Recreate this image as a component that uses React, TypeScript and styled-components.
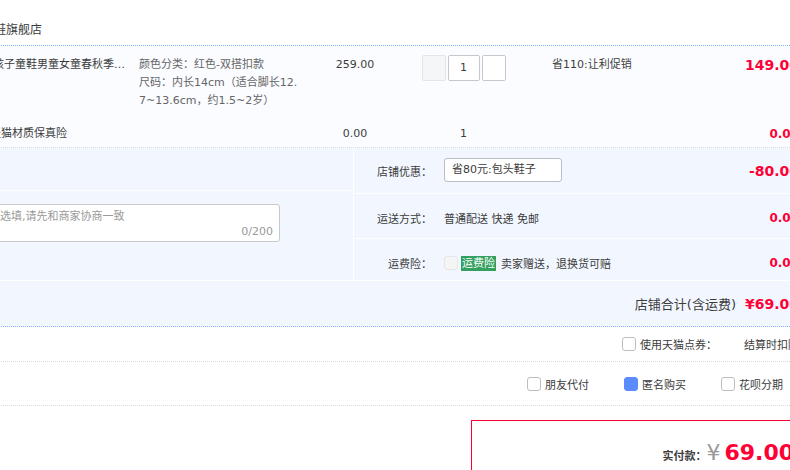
import React from 'react';
import styled, { createGlobalStyle } from 'styled-components';

const GlobalStyle = createGlobalStyle`
  html, body {
    margin: 0;
    padding: 0;
    background: #fff;
    overflow: hidden;
  }
  body {
    font-family: 'DejaVu Sans', 'Noto Sans CJK SC', sans-serif;
    font-size: 11px;
    color: #3c3c3c;
  }
`;

const RED = '#ff0036';
const BLUE_LINE = '#80b2ff';
const GRAY_LINE = '#d9d9d9';
const PANEL_BG = '#f2f7ff';

interface LineItem {
  title: string;
  specs: string[];
  price: string;
  qty: number;
  promo: string;
  total: string;
}

const item: LineItem = {
  title: '男孩子童鞋男童女童春秋季新款板鞋',
  specs: ['颜色分类：红色-双搭扣款', '尺码：内长14cm（适合脚长12.7~13.6cm，约1.5~2岁）'],
  price: '259.00',
  qty: 1,
  promo: '省110:让利促销',
  total: '149.00',
};

const App: React.FC = () => {
  return (
    <>
      <GlobalStyle />
      <Page>
        <StoreHeader>
          <StoreName>童鞋旗舰店</StoreName>
        </StoreHeader>

        <OrderItems>
          <ItemRow>
            <Thumb />
            <ItemTitle>{item.title}</ItemTitle>
            <Specs>
              {item.specs.map((s) => (
                <div key={s}>{s}</div>
              ))}
            </Specs>
            <PriceCell>{item.price}</PriceCell>
            <QtyCell>
              <Stepper>
                <StepButton $disabled />
                <QtyInput>{item.qty}</QtyInput>
                <StepButton />
              </Stepper>
            </QtyCell>
            <Promo>{item.promo}</Promo>
            <Amount $size={14}>{item.total}</Amount>
          </ItemRow>
          <ServiceRow>
            <span />
            <ServiceTitle>天猫材质保真险</ServiceTitle>
            <span />
            <PriceCell>0.00</PriceCell>
            <QtyCell>1</QtyCell>
            <span />
            <Amount $size={12}>0.00</Amount>
          </ServiceRow>
        </OrderItems>

        <Extras>
          <MemoColumn>
            <MemoRow $height={42} />
            <MemoRow>
              <MemoLabel>给卖家留言：</MemoLabel>
              <MemoBox>
                <MemoInput placeholder="选填,请先和商家协商一致" />
                <MemoCount>0/200</MemoCount>
              </MemoBox>
            </MemoRow>
          </MemoColumn>
          <OptionColumn>
            <OptionRow $height={46} $padTop={1}>
              <OptionLabel>店铺优惠：</OptionLabel>
              <OptionValue>
                <CouponSelect>省80元:包头鞋子</CouponSelect>
              </OptionValue>
              <Amount $size={14}>-80.00</Amount>
            </OptionRow>
            <OptionRow $height={45} $padTop={4}>
              <OptionLabel>运送方式：</OptionLabel>
              <OptionValue>普通配送 快递 免邮</OptionValue>
              <Amount $size={12}>0.00</Amount>
            </OptionRow>
            <OptionRow $height={41} $padTop={7} $last>
              <OptionLabel>运费险：</OptionLabel>
              <OptionValue>
                <Check $disabled />
                <Badge>运费险</Badge>
                卖家赠送，退换货可赔
              </OptionValue>
              <Amount $size={12}>0.00</Amount>
            </OptionRow>
          </OptionColumn>
        </Extras>

        <StoreTotal>
          <TotalLabel>店铺合计(含运费)</TotalLabel>
          <TotalAmount>¥69.00</TotalAmount>
        </StoreTotal>

        <CouponRow>
          <CheckItem>
            <Check />
            使用天猫点券：
          </CheckItem>
          <CouponNote>结算时扣除</CouponNote>
        </CouponRow>

        <PayOptions>
          <CheckItem>
            <Check />
            朋友代付
          </CheckItem>
          <CheckItem>
            <Check $checked />
            匿名购买
          </CheckItem>
          <CheckItem>
            <Check />
            花呗分期
          </CheckItem>
        </PayOptions>

        <PayArea>
          <PayBox>
            <PayLabel>实付款：</PayLabel>
            <PayYen>¥</PayYen>
            <PayTotal>69.00</PayTotal>
          </PayBox>
        </PayArea>
      </Page>
    </>
  );
};

const Page = styled.div`
  width: 912px;
  margin-left: -100px;
`;

const StoreHeader = styled.div`
  height: 25px;
  padding: 20px 0 0 82px;
  border-bottom: 1px dotted ${BLUE_LINE};
`;

const StoreName = styled.span`
  font-size: 12px;
  line-height: 20px;
`;

const OrderItems = styled.div`
  background: #fbfcff;
  border-bottom: 1px dotted ${GRAY_LINE};
`;

const ItemRow = styled.div`
  display: grid;
  grid-template-columns: 82px 157px 163px 110px 103px 175px 1fr;
  align-items: start;
  padding-top: 10px;
  line-height: 18px;
`;

const ServiceRow = styled(ItemRow)`
  padding: 15px 0 4px;
`;

const Thumb = styled.div`
  width: 50px;
  height: 50px;
  margin-left: 20px;
  background: #eee;
`;

const ItemTitle = styled.div`
  width: 143px;
  white-space: nowrap;
  overflow: hidden;
  text-overflow: ellipsis;
`;

const ServiceTitle = styled.div`
  padding-left: 8px;
  white-space: nowrap;
`;

const Specs = styled.div`
  color: #666;
  width: 163px;
  word-break: break-all;
`;

const PriceCell = styled.div`
  text-align: center;
  padding-right: 4px;
`;

const QtyCell = styled.div`
  display: flex;
  justify-content: center;
`;

const Stepper = styled.div`
  display: flex;
  gap: 2px;
  margin-top: -1px;
`;

const StepButton = styled.button<{ $disabled?: boolean }>`
  box-sizing: border-box;
  width: 24px;
  height: 26px;
  padding: 0;
  border: 1px solid ${(p) => (p.$disabled ? '#e4e5e9' : '#c6c8d0')};
  border-radius: 2px;
  background: ${(p) => (p.$disabled ? '#f5f6f8' : '#fff')};
`;

const QtyInput = styled.div`
  box-sizing: border-box;
  width: 32px;
  height: 26px;
  border: 1px solid #c6c8d0;
  border-radius: 2px;
  background: #fff;
  text-align: center;
  line-height: 24px;
`;

const Promo = styled.div`
  padding-left: 37px;
`;

const Amount = styled.div<{ $size: number }>`
  text-align: right;
  padding-right: 13px;
  font-size: ${(p) => p.$size}px;
  font-weight: bold;
  color: ${RED};
  line-height: 18px;
`;

const Extras = styled.div`
  display: flex;
  background: ${PANEL_BG};
  border-bottom: 1px solid #fff;
`;

const MemoColumn = styled.div`
  width: 453px;
  border-right: 1px solid #fff;
  display: flex;
  flex-direction: column;
`;

const MemoRow = styled.div<{ $height?: number }>`
  display: flex;
  align-items: flex-start;
  padding: ${(p) => (p.$height ? '0' : '13px 0 0 20px')};
  height: ${(p) => (p.$height ? `${p.$height}px` : 'auto')};
  flex: ${(p) => (p.$height ? 'none' : '1')};
  border-bottom: ${(p) => (p.$height ? '1px solid #fff' : 'none')};
`;

const MemoLabel = styled.span`
  width: 73px;
  line-height: 38px;
`;

const MemoBox = styled.div`
  position: relative;
  width: 287px;
  height: 38px;
`;

const MemoInput = styled.textarea`
  box-sizing: border-box;
  width: 100%;
  height: 100%;
  padding: 4px 6px;
  border: 1px solid #c9c9c9;
  border-radius: 3px;
  resize: none;
  font-family: 'DejaVu Sans', 'Noto Sans CJK SC', sans-serif;
  font-size: 11px;
  line-height: 16px;
  color: #3c3c3c;
  background: #fff;
  &::placeholder {
    color: #9a9a9a;
  }
`;

const MemoCount = styled.span`
  position: absolute;
  right: 7px;
  bottom: 4px;
  color: #9a9a9a;
  font-size: 11px;
`;

const OptionColumn = styled.div`
  flex: 1;
  display: flex;
  flex-direction: column;
`;

const OptionRow = styled.div<{ $height: number; $padTop: number; $last?: boolean }>`
  display: flex;
  align-items: center;
  height: ${(p) => p.$height}px;
  box-sizing: border-box;
  padding-top: ${(p) => p.$padTop}px;
  border-bottom: ${(p) => (p.$last ? 'none' : '1px solid #fff')};
`;

const OptionLabel = styled.span`
  width: 78px;
  margin-right: 12px;
  text-align: right;
`;

const OptionValue = styled.div`
  flex: 1;
  display: flex;
  align-items: center;
`;

const CouponSelect = styled.div`
  box-sizing: border-box;
  width: 118px;
  height: 24px;
  margin-top: -2px;
  padding-left: 7px;
  border: 1px solid #b9bdc7;
  border-radius: 3px;
  background: #fff;
  line-height: 22px;
`;

const Check = styled.span<{ $checked?: boolean; $disabled?: boolean }>`
  display: inline-block;
  box-sizing: border-box;
  flex: none;
  width: 14px;
  height: 14px;
  border-radius: 3px;
  border: 1px solid ${(p) => (p.$checked ? '#5a8cff' : p.$disabled ? '#e6e6e6' : '#bdbdbd')};
  background: ${(p) => (p.$checked ? '#5a8cff' : p.$disabled ? '#f5f5f5' : '#fff')};
  margin-right: 3px;
`;

const Badge = styled.span`
  background: #33a060;
  color: #fff;
  height: 15px;
  line-height: 15px;
  padding: 0 1px;
  margin-right: 5px;
`;

const StoreTotal = styled.div`
  display: flex;
  justify-content: flex-end;
  align-items: center;
  height: 45px;
  padding-right: 13px;
  background: ${PANEL_BG};
  border-bottom: 1px dotted ${BLUE_LINE};
`;

const TotalLabel = styled.span`
  font-size: 13px;
`;

const TotalAmount = styled.span`
  margin-left: 9px;
  font-size: 14px;
  font-weight: bold;
  color: ${RED};
`;

const CouponRow = styled.div`
  display: flex;
  justify-content: flex-end;
  align-items: center;
  height: 34px;
  padding-right: 13px;
  border-bottom: 1px dotted ${GRAY_LINE};
`;

const CheckItem = styled.label`
  display: flex;
  align-items: center;
  gap: 1px;
`;

const CouponNote = styled.span`
  margin-left: 27px;
`;

const PayOptions = styled.div`
  display: flex;
  justify-content: flex-end;
  align-items: center;
  gap: 35px;
  height: 43px;
  padding-right: 29px;
  border-bottom: 1px dotted ${GRAY_LINE};
`;

const PayArea = styled.div`
  display: flex;
  justify-content: flex-end;
  padding-top: 14px;
`;

const PayBox = styled.div`
  box-sizing: border-box;
  width: 341px;
  height: 90px;
  border: 1px solid ${RED};
  display: flex;
  justify-content: flex-end;
  align-items: baseline;
  padding: 19px 17px 0 0;
`;

const PayLabel = styled.span`
  font-weight: bold;
  color: #3c3c3c;
`;

const PayYen = styled.span`
  font-size: 22px;
  color: #999;
  margin-right: 4px;
`;

const PayTotal = styled.span`
  font-size: 22px;
  font-weight: bold;
  color: ${RED};
`;

export default App;
